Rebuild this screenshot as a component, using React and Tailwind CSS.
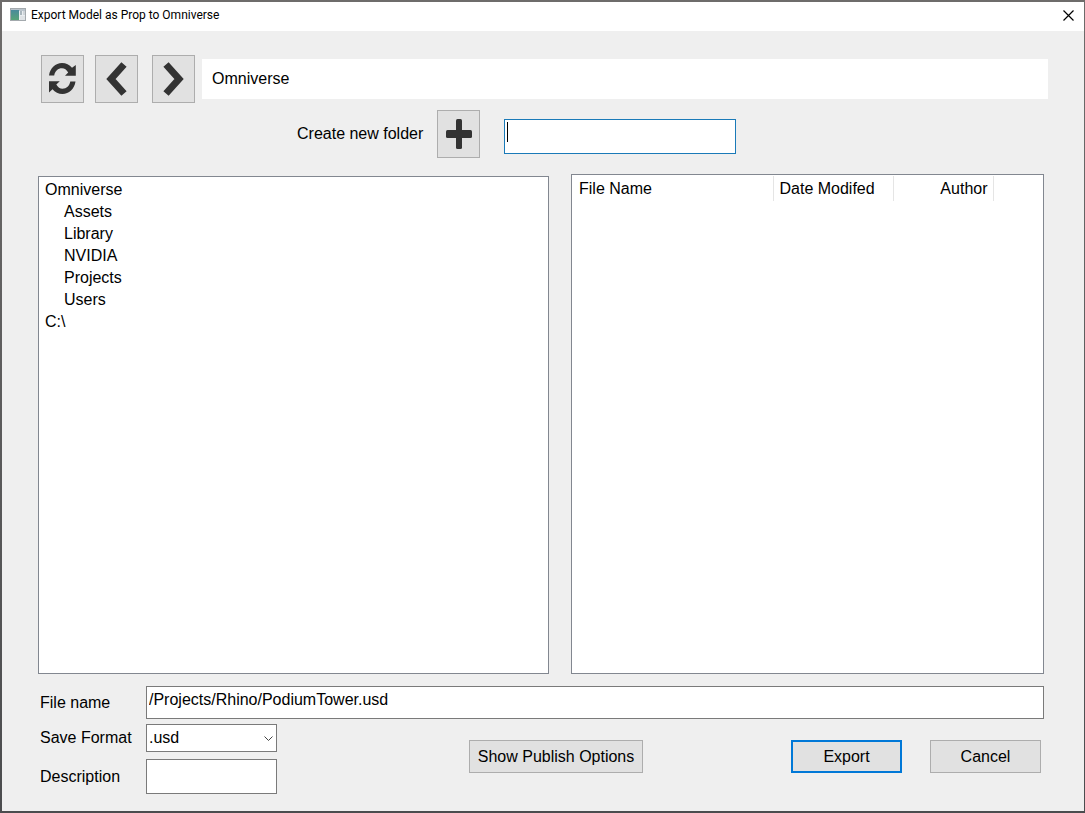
import React, { useState } from 'react';

const FOLDERS = [
  { name: 'Omniverse', child: false },
  { name: 'Assets', child: true },
  { name: 'Library', child: true },
  { name: 'NVIDIA', child: true },
  { name: 'Projects', child: true },
  { name: 'Users', child: true },
  { name: 'C:\\', child: false },
];

const ToolButton = ({ label, children }) => (
  <button
    type="button"
    aria-label={label}
    className="flex h-12 w-[43px] shrink-0 items-center justify-center border border-[#adadad] bg-[#e1e1e1] text-[#333333] hover:bg-[#e5f1fb]"
  >
    {children}
  </button>
);

const AppIcon = () => (
  <svg width="16" height="14" viewBox="0 0 16 14" aria-hidden="true">
    <defs>
      <linearGradient id="pane" x1="0" y1="0" x2="0" y2="1">
        <stop offset="0" stopColor="#4a8a9c" />
        <stop offset="1" stopColor="#58a378" />
      </linearGradient>
    </defs>
    <rect x="0.5" y="0.5" width="15" height="12" fill="#e9edf0" stroke="#a3a9ad" />
    <rect x="1" y="1" width="14" height="2" fill="#b9c3cb" />
    <rect x="1" y="2" width="8" height="10" fill="url(#pane)" />
    <rect x="10" y="3" width="2" height="4" fill="#a9b6bd" />
    <rect x="13" y="3" width="2" height="4" fill="#cfd5d9" />
    <rect x="10" y="8" width="5" height="4" fill="#dfe3e6" />
  </svg>
);

const RefreshIcon = () => (
  <svg width="27" height="32" viewBox="0 0 27 32" aria-hidden="true">
    <path d="M0 12.5C1 5 6.500 0 13 0c4 0 7.500 1.800 10 4.800L26.800 2v10.800H16l3.200-3.200C17.600 6.800 15.500 5.300 13 5.300c-4 0-7 2.700-7.800 7.200z" fill="currentColor" />
    <path d="M26.500 18.500C25.500 26 20 31 13.500 31c-4 0-7.500-1.800-10-4.800L0 29.500V18.200h10.800l-3.500 3.200c1.600 2.800 3.700 4.300 6.200 4.300 4 0 7-2.700 7.800-7.200z" fill="currentColor" />
  </svg>
);

const App = () => {
  const [folder, setFolder] = useState('');
  const [fileName, setFileName] = useState('/Projects/Rhino/PodiumTower.usd');
  const [description, setDescription] = useState('');

  return (
    <div className="flex min-h-screen flex-col bg-linear-to-b from-[#6e6c6b] to-[#4b4c4e] pt-[2px] pr-px pb-[2px] pl-[2px] font-['Liberation_Sans',Arial,sans-serif] text-base leading-[22px] text-black">
      <div className="flex grow flex-col bg-[#efefef]">
        {/* Title bar */}
        <header className="flex h-[29px] items-center bg-white pr-2 pb-[3px] pl-2">
          <AppIcon />
          <h1 className="ml-[5px] grow font-[Roboto,'Segoe_UI',sans-serif] text-[12px] leading-4">
            Export Model as Prop to Omniverse
          </h1>
          <button type="button" aria-label="Close" className="p-0.5">
            <svg width="11" height="11" viewBox="0 0 11 11" aria-hidden="true">
              <path d="M0.5 0.5l10 10M10.5 0.5l-10 10" stroke="black" strokeWidth="1.2" />
            </svg>
          </button>
        </header>

        {/* Navigation */}
        <nav className="flex items-center pt-6 pr-9 pl-[39px]">
          <ToolButton label="Refresh">
            <RefreshIcon />
          </ToolButton>
          <div className="ml-[11px] flex gap-[14px]">
            <ToolButton label="Back">
              <svg width="21" height="36" viewBox="0 0 21 36" aria-hidden="true">
                <path d="M18 3.500L5 18l13 14.500" fill="none" stroke="currentColor" strokeWidth="7" />
              </svg>
            </ToolButton>
            <ToolButton label="Forward">
              <svg width="21" height="36" viewBox="0 0 21 36" aria-hidden="true">
                <path d="M3 3.500L16 18 3 32.500" fill="none" stroke="currentColor" strokeWidth="7" />
              </svg>
            </ToolButton>
          </div>
          <div className="ml-[7px] flex h-10 grow items-center bg-white px-[10px]">Omniverse</div>
        </nav>

        {/* New folder */}
        <div className="flex items-center pt-[7px] pl-[295px]">
          <label htmlFor="new-folder" className="w-[140px]">Create new folder</label>
          <ToolButton label="Create folder">
            <svg width="26" height="30" viewBox="0 0 26 30" aria-hidden="true">
              <rect x="10" y="0" width="6" height="30" rx="1.5" fill="currentColor" />
              <rect x="0" y="11" width="26" height="8" rx="1.5" fill="currentColor" />
            </svg>
          </ToolButton>
          <div className="relative mt-1 ml-6">
            <input
              id="new-folder"
              type="text"
              value={folder}
              onChange={(e) => setFolder(e.target.value)}
              className="block h-[35px] w-[232px] border border-[#1a7ab8] bg-white px-[3px] caret-transparent outline-none"
            />
            {!folder && <span className="absolute top-[3px] left-[3px] h-5 w-px bg-black" />}
          </div>
        </div>

        {/* Browser */}
        <main className="grid grow grid-cols-[511fr_473fr] gap-[22px] pt-4 pr-10 pl-9">
          <ul className="mt-[2px] border border-[#828790] bg-white px-[6px] pt-[2px]">
            {FOLDERS.map((item) => (
              <li key={item.name} className={item.child ? 'pl-[19px]' : ''}>{item.name}</li>
            ))}
          </ul>
          <div className="border border-[#828790] bg-white pt-px">
            <table className="w-full table-fixed border-collapse">
              <thead>
                <tr className="h-[25px] text-left">
                  <th className="w-[201px] border-r border-[#e5e5e5] p-0 pl-[7px] font-normal">File Name</th>
                  <th className="w-[120px] border-r border-[#e5e5e5] p-0 pl-[6px] font-normal">Date Modifed</th>
                  <th className="w-[100px] border-r border-[#e5e5e5] p-0 pr-[5px] text-right font-normal">Author</th>
                  <td className="p-0" />
                </tr>
              </thead>
            </table>
          </div>
        </main>

        {/* File options */}
        <footer className="pt-3 pr-10 pb-[17px] pl-[38px]">
          <div className="flex items-center">
            <label htmlFor="file-name" className="w-[106px] shrink-0">File name</label>
            <input
              id="file-name"
              type="text"
              value={fileName}
              onChange={(e) => setFileName(e.target.value)}
              className="h-[33px] grow border border-[#7a7a7a] bg-white px-[2px] pb-[5px] outline-none"
            />
          </div>
          <div className="mt-[5px] flex items-start">
            <div className="flex flex-col gap-[7px]">
              <div className="flex items-center">
                <label htmlFor="save-format" className="w-[106px]">Save Format</label>
                <div className="relative">
                  <select
                    id="save-format"
                    className="block h-7 w-[131px] appearance-none border border-[#7a7a7a] bg-white px-[2px] outline-none"
                  >
                    <option>.usd</option>
                  </select>
                  <svg className="pointer-events-none absolute top-3 right-1" width="9" height="6" viewBox="0 0 9 6" aria-hidden="true">
                    <path d="M0.5 0.5l4 4 4-4" fill="none" stroke="#444" />
                  </svg>
                </div>
              </div>
              <div className="flex items-center">
                <label htmlFor="description" className="w-[106px]">Description</label>
                <input
                  id="description"
                  type="text"
                  value={description}
                  onChange={(e) => setDescription(e.target.value)}
                  className="h-[35px] w-[131px] border border-[#7a7a7a] bg-white px-[2px] outline-none"
                />
              </div>
            </div>
            <div className="mt-4 flex grow justify-between pr-[3px] pl-48">
              <button type="button" className="h-[33px] w-[174px] border border-[#adadad] bg-[#e1e1e1]">
                Show Publish Options
              </button>
              <div className="flex gap-7">
                <button type="button" className="h-[33px] w-[111px] border-2 border-[#0078d7] bg-[#e1e1e1]">
                  Export
                </button>
                <button type="button" className="h-[33px] w-[111px] border border-[#adadad] bg-[#e1e1e1]">
                  Cancel
                </button>
              </div>
            </div>
          </div>
        </footer>
      </div>
    </div>
  );
};

export default App;
